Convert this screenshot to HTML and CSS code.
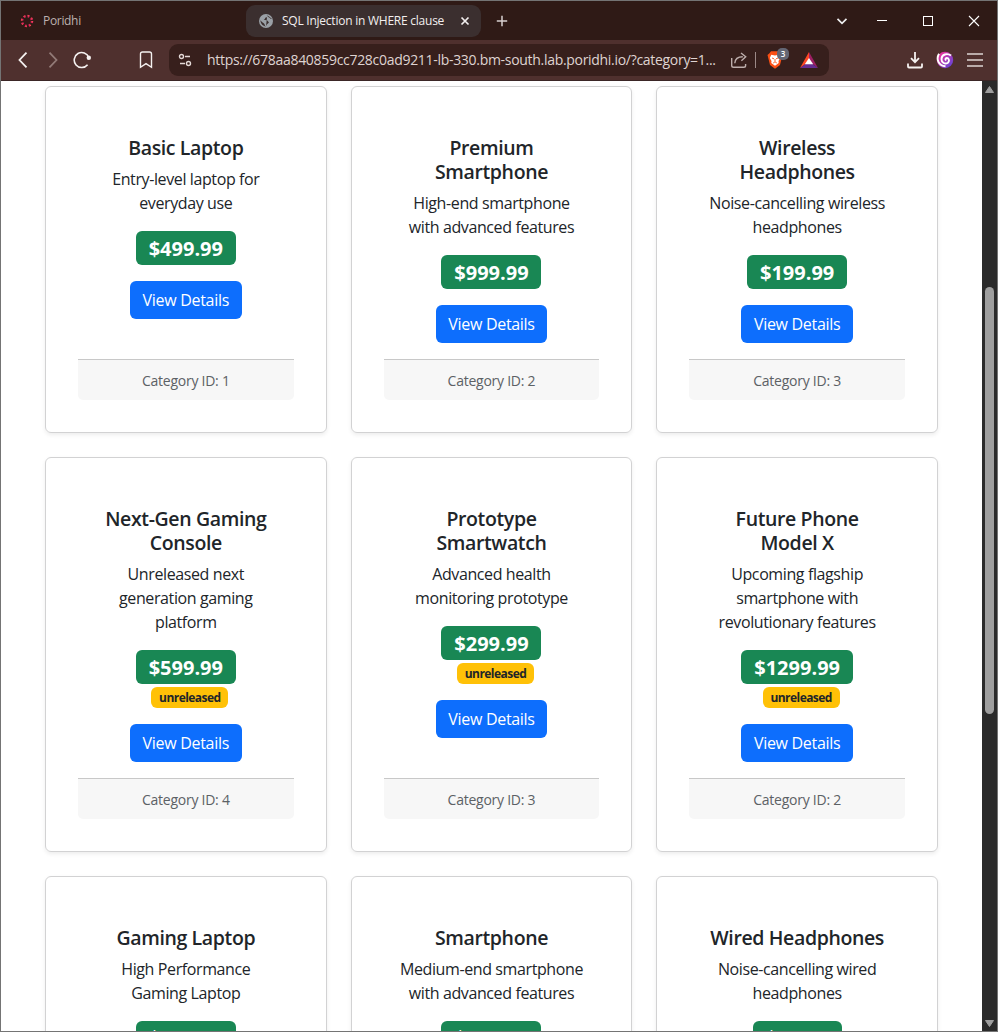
FILE: index.html
```html
<!DOCTYPE html>
<html lang="en">
<head>
<meta charset="utf-8">
<title>SQL Injection in WHERE clause</title>
<link rel="stylesheet" href="styles.css">
</head>
<body>
<div class="window">
  <div class="tabs">
    <div class="tab">
      <svg class="fav" width="14" height="14" viewBox="0 0 14 14"><circle cx="7" cy="7" r="5" fill="none" stroke="#e0255a" stroke-width="2.4" stroke-dasharray="1.9 2.03"/><circle cx="7" cy="7" r="5.6" fill="none" stroke="#f5694a" stroke-width="1" stroke-dasharray="1 3.4"/></svg>
      <span class="tab-name muted">Poridhi</span>
    </div>
    <div class="tab active">
      <svg class="globe" width="14" height="14" viewBox="0 0 14 14"><circle cx="7" cy="7" r="7" fill="#9aa0a6"/><path d="M8.200 1.500C8.500 3 7.500 3.700 6.200 3.800c0 1.200-.8 1.400-1.500 1.700.6.600 2.500.5 3.400.9.800.4.900 1.300 1.800 1.500-.2 1.500-1.600 1.700-2 2.700-.2.800-.6 1.500-1.400 1.900C5.600 11.500 6 10.400 5 9.600 3.900 8.700 2.600 7.800 1.400 6.300 1.500 9.600 3.800 12.300 7 12.500" fill="#3b2f2f"/><path d="M8.500 1.700c.9 1.700 2.900 1.500 3.800 3.200" stroke="#3b2f2f" fill="none"/></svg>
      <span class="tab-name">SQL Injection in WHERE clause</span>
      <svg class="close" width="10" height="10" viewBox="0 0 10 10" stroke="#f2eeee" stroke-width="1.7"><path d="M1.500 1.500l7 7M8.500 1.500l-7 7"/></svg>
    </div>
    <svg class="plus" width="12" height="12" viewBox="0 0 12 12" stroke="#d8d0cf" stroke-width="1.500"><path d="M6 .8v10.400M.8 6h10.400"/></svg>
    <div class="controls">
      <svg width="12" height="12" viewBox="0 0 12 12" fill="none" stroke="#eee" stroke-width="1.700"><path d="M1.500 3.800L6 8.300l4.500-4.500"/></svg>
      <svg width="12" height="12" viewBox="0 0 12 12" stroke="#fff"><path d="M1 5.500h10"/></svg>
      <svg width="12" height="12" viewBox="0 0 12 12" fill="none" stroke="#fff"><rect x="1.500" y="1.500" width="9" height="9"/></svg>
      <svg width="12" height="12" viewBox="0 0 12 12" stroke="#fff" stroke-width="1.100"><path d="M1 1l10 10M11 1L1 11"/></svg>
    </div>
  </div>
  <div class="toolbar">
    <div class="nav">
      <svg width="20" height="20" viewBox="0 0 20 20" fill="none" stroke="#f5f1f0" stroke-width="1.800"><path d="M13.500 2.700L6.500 10l7 7.300"/></svg>
      <svg width="20" height="20" viewBox="0 0 20 20" fill="none" stroke="#927a77" stroke-width="1.800"><path d="M6.500 2.700l7 7.300-7 7.300"/></svg>
      <svg width="20" height="20" viewBox="0 0 20 20" fill="none" stroke="#f5f1f0" stroke-width="1.600"><path d="M14.600 14.700A7.500 7.500 0 1 1 15.800 7.500"/><circle cx="15.800" cy="7.800" r="2.200" fill="#f5f1f0" stroke="none"/></svg>
    </div>
    <svg class="bookmark" width="14" height="18" viewBox="0 0 14 18" fill="none" stroke="#f5f1f0" stroke-width="1.400"><path d="M1.500 3Q1.500 1 3.500 1h7Q12.500 1 12.500 3v13.300L7 12.600l-5.500 3.700z"/></svg>
    <div class="address">
      <svg class="tune" width="14" height="14" viewBox="0 0 14 14" fill="none" stroke="#e3d8d6" stroke-width="1.400"><circle cx="3.500" cy="3.500" r="2"/><path d="M7 3.500h5M2 10.500h5"/><circle cx="10.500" cy="10.500" r="2"/></svg>
      <span class="url">https://678aa840859cc728c0ad9211-lb-330.bm-south.lab.poridhi.io/?category=1...</span>
      <svg class="share" width="18" height="18" viewBox="0 0 18 18" fill="none" stroke="#bdaeac" stroke-width="1.400"><path d="M1.700 7v7.500q0 1.800 1.800 1.800h10.300q1.800 0 1.800-1.800V13M4.800 12.300c.2-4 3-6.600 8-6.600M11 2l4.700 3.800-4.300 3.900"/></svg>
      <span class="divider"></span>
      <div class="shield">
        <svg width="16" height="18" viewBox="0 0 16 18"><path d="M4 .3h8l1.500 2L15.500 4l-.9 3.500L13 14 8 17.800 3 14 1.400 7.500.5 4l2-1.700z" fill="#fb4f14"/><path d="M4.300 3.800L8 4.500l3.700-.7L13.200 7l-1.700 3 .2 2L8 14.700 4.300 12l.2-2-1.700-3z" fill="#fff"/><path d="M5 7l2 .8M11 7l-2 .8M8 8v2.500M6.200 12L8 10.800l1.800 1.200" stroke="#fb4f14" stroke-width=".9" fill="none"/></svg>
        <span class="count">3</span>
      </div>
      <svg class="bat" width="18" height="16" viewBox="0 0 18 16"><path d="M9 0L0 16 9 9.500z" fill="#ff4724"/><path d="M9 0l9 16-9-6.500z" fill="#9e1f63"/><path d="M0 16h18L9 9.500z" fill="#662d91"/><path d="M9 6l4.200 6.300H4.800z" fill="#fff"/></svg>
    </div>
    <div class="actions">
      <svg width="18" height="18" viewBox="0 0 18 18" fill="none" stroke="#f5f1f0" stroke-width="1.800"><path d="M9 1v10M5 7.200l4 4 4-4M2 12.500v3q0 1 1 1h12q1 0 1-1v-3"/></svg>
      <svg width="18" height="18" viewBox="0 0 18 18" fill="none"><defs><linearGradient id="swirl" x1="0" y1="0" x2="1" y2="1"><stop offset=".2" stop-color="#e0359f"/><stop offset="1" stop-color="#5146e0"/></linearGradient></defs><circle cx="9" cy="9" r="8.200" fill="url(#swirl)"/><path d="M10.300 9.300c-1.400-.5-1-2.400.6-2.300 2.300.2 2.700 3.200 1 4.700C9.200 13.800 5.400 11.700 5.500 8 5.700 3.500 11 1.600 15 4.600M3 2.800C-.2 8 2.500 15 9.500 15.200" stroke="#fff" stroke-width="1.900"/></svg>
      <svg width="18" height="14" viewBox="0 0 18 14" stroke="#ddd3d2" stroke-width="1.500"><path d="M1 1h16M1 7h16M1 13h16"/></svg>
    </div>
  </div>
  <div class="viewport">
    <main class="products">
      <article class="card"><div class="card-body"><h5>Basic Laptop</h5><p>Entry-level laptop for<br>everyday use</p><span class="price">$499.99</span><a class="button">View Details</a></div><footer>Category ID: 1</footer></article>
      <article class="card"><div class="card-body"><h5>Premium<br>Smartphone</h5><p>High-end smartphone<br>with advanced features</p><span class="price">$999.99</span><a class="button">View Details</a></div><footer>Category ID: 2</footer></article>
      <article class="card"><div class="card-body"><h5>Wireless<br>Headphones</h5><p>Noise-cancelling wireless<br>headphones</p><span class="price">$199.99</span><a class="button">View Details</a></div><footer>Category ID: 3</footer></article>
      <article class="card"><div class="card-body"><h5>Next-Gen Gaming<br>Console</h5><p>Unreleased next<br>generation gaming<br>platform</p><span class="price">$599.99</span><span class="tag">unreleased</span><a class="button">View Details</a></div><footer>Category ID: 4</footer></article>
      <article class="card"><div class="card-body"><h5>Prototype<br>Smartwatch</h5><p>Advanced health<br>monitoring prototype</p><span class="price">$299.99</span><span class="tag">unreleased</span><a class="button">View Details</a></div><footer>Category ID: 3</footer></article>
      <article class="card"><div class="card-body"><h5>Future Phone<br>Model X</h5><p>Upcoming flagship<br>smartphone with<br>revolutionary features</p><span class="price wide">$1299.99</span><span class="tag">unreleased</span><a class="button">View Details</a></div><footer>Category ID: 2</footer></article>
      <article class="card"><div class="card-body"><h5>Gaming Laptop</h5><p>High Performance<br>Gaming Laptop</p><span class="price cut">$</span></div></article>
      <article class="card"><div class="card-body"><h5>Smartphone</h5><p>Medium-end smartphone<br>with advanced features</p><span class="price cut">$</span></div></article>
      <article class="card"><div class="card-body"><h5>Wired Headphones</h5><p>Noise-cancelling wired<br>headphones</p><span class="price narrow cut">$</span></div></article>
    </main>
    <div class="scrollbar">
      <svg width="9" height="7" viewBox="0 0 9 7"><path d="M4.500.5L8.500 6.500h-8z" fill="#9f9f9f" stroke="#9f9f9f" stroke-linejoin="round"/></svg>
      <div class="thumb"></div>
      <svg width="9" height="7" viewBox="0 0 9 7"><path d="M4.500 6.500l4-6h-8z" fill="#9f9f9f" stroke="#9f9f9f" stroke-linejoin="round"/></svg>
    </div>
  </div>
</div>
</body>
</html>
```
FILE: styles.css
```css
* { box-sizing: border-box; }
body { margin: 0; font-family: "Segoe UI", "Open Sans", "Noto Sans", sans-serif; color: #212529; }
svg { display: block; flex: none; }
.window { width: 998px; height: 1032px; border: 1px solid #747474; display: flex; flex-direction: column; overflow: hidden; background: #fff; }
.tabs { height: 39px; flex: none; background: #2f1a16; display: flex; align-items: center; color: #f2eeee; font-size: 12px; }
.tab { display: flex; align-items: center; width: 245px; height: 32px; padding-left: 19px; white-space: nowrap; }
.tab-name { letter-spacing: -0.32px; margin-left: 9px; padding-bottom: 1px; }
.muted { color: #bcb1af; }
.tab.active { width: 235px; padding-left: 13px; background: #3b2f2f; border-radius: 9px; }
.active .tab-name { margin-left: 9px; width: 163px; letter-spacing: -0.24px; }
.close { margin-left: 15px; }
.plus { margin-left: 15px; }
.controls { margin-left: auto; display: flex; gap: 34px; padding-right: 17px; }
.controls svg:first-child { margin-right: -6px; }
.toolbar { height: 41px; flex: none; background: #4f302e; border-bottom: 1px solid #3b2626; display: flex; align-items: center; }
.nav { display: flex; gap: 10px; margin-left: 12px; }
.bookmark { margin-left: 46px; }
.address { width: 660px; height: 32px; margin-left: 16px; background: #371f1c; border-radius: 9px; display: flex; align-items: center; color: #dfd3d1; }
.tune { margin-left: 9px; }
.url { margin-left: 15px; width: 512px; font-size: 14px; letter-spacing: -0.3px; white-space: nowrap; padding-bottom: 1px; }
.share { margin-left: 11px; }
.divider { width: 1px; height: 16px; margin-left: 7px; background: #9c8987; }
.shield { position: relative; margin-left: 11px; }
.count { position: absolute; left: 10px; top: -3px; width: 12px; height: 12px; border-radius: 5px; background: #646674; color: #fff; font-size: 8px; font-weight: 600; line-height: 12px; text-align: center; }
.bat { margin-left: 17px; }
.actions { display: flex; align-items: center; gap: 12px; margin-left: auto; padding-right: 13px; }
.viewport { flex: 1; min-height: 0; display: flex; overflow: hidden; }
.products { width: 981px; padding: 5px 44px 0; display: grid; grid-template-columns: repeat(3, 281.67px); grid-template-rows: 347px 395px 395px; gap: 24px; }
.card { border: 1px solid #d2d2d3; border-radius: 6px; padding: 32px; box-shadow: 0 2px 4px rgba(0,0,0,.075); display: flex; flex-direction: column; text-align: center; }
.card-body { flex: 1; padding: 17px 0 16px; display: flex; flex-direction: column; align-items: center; white-space: nowrap; }
h5 { margin: 0 0 7px; font-size: 19.5px; line-height: 24px; font-weight: 600; letter-spacing: -0.37px; }
p { margin: 0 0 15.500px; font-size: 16px; line-height: 24px; letter-spacing: -0.39px; }
.price { flex: none; width: 100px; height: 34px; border-radius: 6px; background: #198754; color: #fff; font-size: 20px; font-weight: 700; line-height: 35px; letter-spacing: 0; }
.price.wide { width: 112px; }
.price.narrow { width: 89px; }
.price.cut { padding-left: 13px; text-align: left; line-height: 34px; }
.tag { margin: 3px 0 0 8px; width: 77px; height: 21px; border-radius: 6px; background: #ffc107; font-size: 12px; font-weight: 700; line-height: 21px; letter-spacing: -0.55px; }
.button { margin-top: 16px; width: 111.500px; height: 38px; border-radius: 6px; background: #0d6efd; color: #fff; font-size: 16px; line-height: 38px; letter-spacing: -0.3px; }
footer { height: 41px; border-top: 1px solid #c8c8c8; border-radius: 0 0 5px 5px; background: #f7f7f7; color: #5c6165; font-size: 14px; line-height: 42px; letter-spacing: -0.25px; }
.scrollbar { width: 15px; background: #2b2b2b; display: flex; flex-direction: column; align-items: center; padding: 5px 0 4px; }
.thumb { width: 9px; height: 427px; margin: 194px 0 auto; border-radius: 5px; background: #9f9f9f; }
```
